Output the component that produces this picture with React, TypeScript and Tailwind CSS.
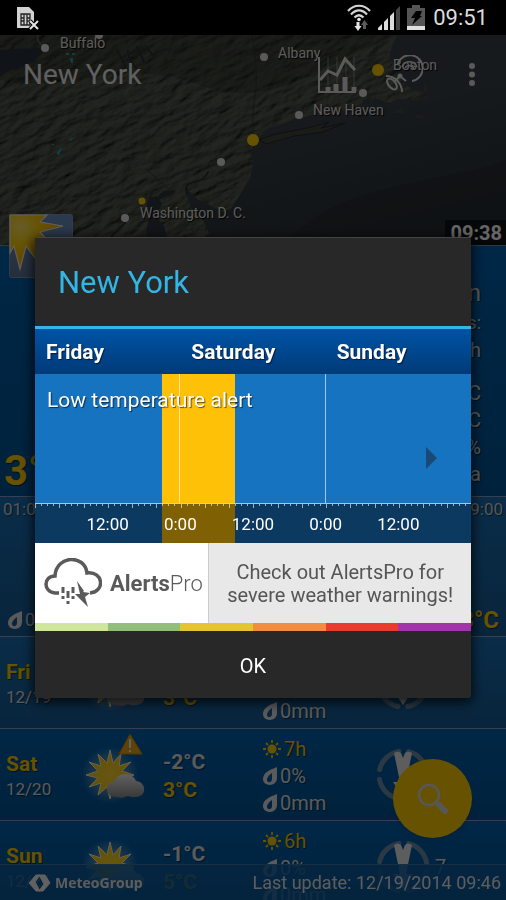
import type { ReactNode } from 'react';

interface Forecast {
  day: string;
  date: string;
  min: string;
  max: string;
  sun: string;
  chance: string;
  rain: string;
  wind: string;
  alert?: boolean;
}

const forecasts: Forecast[] = [
  { day: 'Fri', date: '12/19', min: '-1°C', max: '3°C', sun: '5h', chance: '0%', rain: '0mm', wind: '' },
  { day: 'Sat', date: '12/20', min: '-2°C', max: '3°C', sun: '7h', chance: '0%', rain: '0mm', wind: '', alert: true },
  { day: 'Sun', date: '12/21', min: '-1°C', max: '5°C', sun: '6h', chance: '0%', rain: '0mm', wind: '7' },
];

const cities = [
  { name: 'Buffalo', place: 'left-[60px] top-0' },
  { name: 'Albany', place: 'left-[278px] top-[10px]' },
  { name: 'Boston', place: 'left-[393px] top-[22px]' },
  { name: 'New Haven', place: 'left-[313px] top-[67px]' },
  { name: 'Washington D. C.', place: 'left-[140px] top-[170px]' },
];

const days = ['Friday', 'Saturday', 'Sunday'];
const hours = ['12:00', '0:00', '12:00', '0:00', '12:00'];

// hours counted from Friday 0:00
const TOTAL_HOURS = 72;
const alertRange = { start: 21, end: 33 };

const scale = ['bg-[#cfe69b]', 'bg-[#8fbf7b]', 'bg-[#e6c235]', 'bg-[#f58b3c]', 'bg-[#e63e2d]', 'bg-[#a334ab]'];

function StatusBar() {
  return (
    <header className="relative z-30 flex h-[35px] shrink-0 items-center justify-between bg-black pr-[18px] pl-4">
      <svg width="24" height="26" viewBox="0 0 24 26" aria-hidden="true">
        <path d="M1 2h12l5 5v16H1z" fill="#d2d2d2" />
        <path d="M5 9h9v11H5zM5 13h3M5 16h3M11 13h3M11 16h3M8 9v11M11 9v11" fill="none" stroke="#222" strokeWidth="1.3" />
        <path d="M14 16l8 8M22 16l-8 8" stroke="#000" strokeWidth="4" />
        <path d="M14 16l8 8M22 16l-8 8" stroke="#e4e4e4" strokeWidth="2" />
      </svg>
      <div className="flex items-center gap-[6px]">
        <svg width="24" height="27" viewBox="0 0 24 27" fill="none" aria-hidden="true">
          <path d="M1 7C7 0 17 0 23 7M4 10.500C9 5 15 5 20 10.500M7.500 13.500C10.500 10.500 13.500 10.500 16.500 13.500" stroke="#d6d6d6" strokeWidth="2.200" />
          <circle cx="12" cy="15.500" r="1.800" fill="#e6e6e6" />
          <path d="M9.500 18h3v4h2L11 27l-3.500-5h2z" fill="#e6e6e6" />
          <path d="M16 25v-4h-2l3.500-5 3.500 5h-2v4z" fill="#5a5a5a" />
        </svg>
        <svg width="24" height="26" viewBox="0 0 24 26" aria-hidden="true">
          <path d="M1 25v-2l4-4v6zM7 25v-8l4-4v12zM13 25V11l4-4v18z" fill="#dcdcdc" />
          <path d="M19 25V5l4-4v24z" fill="#444" />
        </svg>
        <svg width="18" height="27" viewBox="0 0 18 27" aria-hidden="true">
          <path d="M0 4h5V1h8v3h5v22H0z" fill="#555" />
          <path d="M0 22h18v4H0z" fill="#e0e0e0" />
          <path d="M9 7h6l-2 5h2L5 21l3-7H4z" fill="#000" />
        </svg>
        <span className="pl-[2px] text-[22px] leading-none text-[#dcdcdc]">09:51</span>
      </div>
    </header>
  );
}

function MapTerrain() {
  return (
    <svg className="absolute inset-0 h-full w-full" viewBox="0 0 506 210" preserveAspectRatio="xMinYMin slice" aria-hidden="true">
      <defs>
        <filter id="relief" x="0" y="0" width="100%" height="100%">
          <feTurbulence type="fractalNoise" baseFrequency="0.05 0.13" numOctaves="6" seed="8" result="noise" />
          <feDiffuseLighting in="noise" surfaceScale="3" lightingColor="#5c6154" result="light">
            <feDistantLight azimuth="235" elevation="44" />
          </feDiffuseLighting>
          <feComposite in="light" in2="SourceGraphic" operator="in" />
        </filter>
        <linearGradient id="sea" x1="0" y1="0" x2="0.6" y2="1">
          <stop offset="0" stopColor="#39434c" />
          <stop offset="0.6" stopColor="#384149" />
          <stop offset="1" stopColor="#2c3338" />
        </linearGradient>
        <clipPath id="land">
          <path d="M0 0H397L391 14 389 24 396 31 397 40 403 47 411 54 423 57 426 49 421 43 427 52 427 63 415 65 398 64 391 68 382 66 374 62 371 70 363 64 361 74 345 77 330 80 312 80 292 86 270 93 259 102 253 111 250 118 254 125 250 143 240 160 231 174 222 177 208 169 198 165 190 157 187 152 186 158 191 172 204 187 209 198 196 210H0z" />
        </clipPath>
      </defs>
      <rect width="506" height="210" fill="url(#sea)" />
      <path d="M285 210C320 165 380 155 425 145S480 135 506 125V210z" fill="#20262a" opacity="0.4" />
      <g clipPath="url(#land)">
        <g transform="rotate(-24 200 100)">
          <rect x="-120" y="-180" width="700" height="560" fill="#fff" filter="url(#relief)" />
        </g>
        <path d="M0 45C60 60 120 20 200 50S330 20 400 0V-10H0z" fill="#20241b" opacity="0.3" />
      </g>
      <path d="M0 15Q24 13 46 13Q38 27 22 31Q8 35 0 42z" fill="#2a333c" />
      <path d="M38 0q-2 8 7 12" fill="none" stroke="#777d7a" />
      <g fill="none" stroke="#29313a" strokeLinecap="round">
        <path d="M117 15l8 15M128 16q1 10 9 18M137 12l7 15M146 11l7 10" strokeWidth="2" />
        <path d="M208 137q-3 8-14 10t-7 12" strokeWidth="2" />
        <path d="M150 168l12-6 12-6M125 188l-6 6-8 8" strokeWidth="2" />
        <path d="M254 106q-3-25 1-45t-3-61" opacity="0.7" />
        <path d="M171 156L146 134" opacity="0.7" />
      </g>
      <path d="M149 163l9-2 6-5 11-1-7 5-9 4 3 5-4 7 1 9 5 6 3 12 1 12h-20l-2-20 3-10-4-8z" fill="#2c353d" />
      <path d="M259 105Q275 98 292 96L312 92 329 87 321 93 345 88 323 97 294 101 266 109z" fill="#42473a" stroke="#20282d" />
      <path d="M392 78l10-5 2 5zM414 80l8 1 3 2-7 0z" fill="#454b3e" />
      <path
        d="M66 18h3v2h-3zM72 18h3v2h-3zM70 23h3v3h-3zM71 26h2v2h-2zM57 117l4-4 1 1-3 6h-2zM69 104l5-1-3 3zM52 109h2v1h-2z"
        fill="#2b93ad"
      />
      <g fill="#e2e2e2">
        <circle cx="45" cy="13" r="4" />
        <path d="M95 0h8q0 4-4 4t-4-4z" />
        <circle cx="264" cy="22" r="4" />
        <circle cx="299" cy="80" r="4" />
        <circle cx="363" cy="58" r="4" />
        <circle cx="221" cy="127" r="4" />
        <circle cx="125" cy="183" r="4" />
      </g>
      <g fill="#ffcc00">
        <circle cx="378" cy="35" r="6" />
        <circle cx="253" cy="105" r="6" />
        <circle cx="142" cy="166" r="3.500" />
      </g>
    </svg>
  );
}

function WeatherTile() {
  return (
    <svg className="absolute top-[179px] left-[9px] z-10" width="64" height="64" viewBox="0 0 64 64" aria-hidden="true">
      <defs>
        <linearGradient id="sky" x1="0" y1="0" x2="0" y2="1">
          <stop offset="0" stopColor="#6b93c4" />
          <stop offset="1" stopColor="#5f7398" />
        </linearGradient>
        <radialGradient id="disc" cx="0.2" cy="0.22" r="0.7">
          <stop offset="0" stopColor="#ffe860" />
          <stop offset="0.5" stopColor="#ffcf05" />
          <stop offset="1" stopColor="#f5b000" />
        </radialGradient>
      </defs>
      <rect x="0.500" y="0.500" width="63" height="63" rx="2" fill="url(#sky)" stroke="#7f98b8" />
      <path d="M1 1H38L31 8 54 12 31 18 48 36 26 31 29 48 17 32 11 55 5 32 1 39z" fill="url(#disc)" stroke="#f4edd0" strokeWidth="1.200" />
    </svg>
  );
}

function RadarMap() {
  return (
    <section className="relative h-[211px] shrink-0 border-b border-[#6b8faf] bg-[#383e38]">
      <div className="absolute inset-0 overflow-hidden">
        <MapTerrain />
        {cities.map((city) => (
          <span key={city.name} className={`absolute text-sm leading-4 text-[#e6e6e6] [text-shadow:1px_1px_1px_#000] ${city.place}`}>
            {city.name}
          </span>
        ))}
        <span className="absolute right-0 bottom-0 bg-black/60 pt-[2px] pr-1 pl-[5px] text-xl leading-[23px] font-bold text-white">09:38</span>
      </div>
      <div className="relative flex h-20 items-center justify-between pr-[29px] pl-[23px]">
        <h1 className="text-[28px] leading-none text-[#f0f0f0]">New York</h1>
        <div className="flex items-center gap-[26px]">
          <button aria-label="Charts">
            <svg width="40" height="40" viewBox="0 0 40 40" fill="none" stroke="#e0e0e0">
              <path d="M2 2v35h37" strokeWidth="2" />
              <path d="M11 2v30M20 2v26M29 2v19M37 2v30" opacity="0.4" />
              <path d="M3 25l8-9 9 4 8-16 10 11" strokeWidth="3" />
              <path d="M11 32v4M19 29v7M28 22v14M37 32v4" strokeWidth="5" />
            </svg>
          </button>
          <div className="flex items-center gap-11">
            <button aria-label="Radar">
              <svg width="40" height="40" viewBox="0 0 40 40" fill="none" stroke="#e0e0e0" strokeWidth="2">
                <path d="M14.500 9A13 13 0 1 1 29 26" />
                <path d="M19 12A8 8 0 0 1 34 12M22 13A5 5 0 0 1 31 14" strokeWidth="1.500" />
                <path d="M3 21A16 16 0 0 1 19 37M12 26l5-5 6 5" />
                <ellipse cx="9" cy="29" rx="3.500" ry="6.500" transform="rotate(-40 9 29)" />
                <circle cx="17" cy="21" r="1.500" fill="#e0e0e0" />
              </svg>
            </button>
            <button aria-label="More options">
              <svg width="10" height="24" viewBox="0 0 10 24" fill="#e0e0e0">
                <circle cx="5" cy="3" r="3" />
                <circle cx="5" cy="11.500" r="3" />
                <circle cx="5" cy="20" r="3" />
              </svg>
            </button>
          </div>
        </div>
      </div>
      <WeatherTile />
    </section>
  );
}

function DropIcon() {
  return (
    <svg width="16" height="20" viewBox="0 0 16 20" className="shrink-0" aria-hidden="true">
      <path d="M15 1v11c0 9-14 9-14 1C1 7 7 4 15 1zM10 7c-4 3-5 5-5 7 0 3 5 3 5-1z" fill="#e2e2e2" fillRule="evenodd" />
    </svg>
  );
}

function SunIcon() {
  return (
    <svg width="20" height="20" viewBox="0 0 20 20" className="shrink-0" aria-hidden="true">
      <circle cx="10" cy="10" r="4.500" fill="#ffcc00" />
      <path d="M10 1v3M10 16v3M1 10h3M16 10h3M4 4l2 2M14 14l2 2M16 4l-2 2M6 14l-2 2" stroke="#ffcc00" strokeWidth="1.800" />
    </svg>
  );
}

function SunCloud({ alert }: { alert?: boolean }) {
  return (
    <svg width="64" height="70" viewBox="0 0 64 70" className="-mt-4 -ml-[2px]" aria-hidden="true">
      <defs>
        <radialGradient id="glow">
          <stop offset="0.4" stopColor="#fff" stopOpacity="0.35" />
          <stop offset="1" stopColor="#fff" stopOpacity="0" />
        </radialGradient>
        <radialGradient id="sunFill">
          <stop offset="0" stopColor="#ffd838" />
          <stop offset="1" stopColor="#f7c800" />
        </radialGradient>
        <linearGradient id="cloud" x1="0" y1="0" x2="0" y2="1">
          <stop offset="0" stopColor="#f2f2f2" />
          <stop offset="1" stopColor="#8c8c8c" />
        </linearGradient>
      </defs>
      <circle cx="27" cy="42" r="29" fill="url(#glow)" />
      <path
        d="M27 17L30 30 38 21 36 33 48 29 39 38 51 42 39 45 48 54 36 50 38 62 30 54 27 66 24 54 15 62 18 50 6 54 15 45 3 42 15 38 6 29 18 33 15 21 24 30z"
        fill="url(#sunFill)"
        stroke="#fff3c0"
        strokeWidth="1"
      />
      <path d="M33 64c-11 0-12-14-2-15 3-10 18-11 22-1 11 1 11 16 0 16q-4 1-8-1-6 3-12 1z" fill="url(#cloud)" />
      {alert && (
        <>
          <path d="M47 1L59 21H36z" fill="#eda21a" stroke="#c98800" strokeLinejoin="round" />
          <path d="M47 6v9M47 17v2" stroke="#f4f4f4" strokeWidth="2" />
        </>
      )}
    </svg>
  );
}

function WindRose() {
  return (
    <svg width="56" height="58" viewBox="0 0 56 58" aria-hidden="true">
      <circle cx="28" cy="29" r="24" fill="none" stroke="#6f8ca8" strokeWidth="5" strokeLinecap="round" strokeDasharray="27.700 10" strokeDashoffset="-5" />
      <path d="M19 7q4-3 7 0l2 5 2-5q3-3 7 0l-6 29h7L28 51 18 36h7z" fill="#e8e8e8" />
    </svg>
  );
}

function Metric({ icon, children }: { icon: ReactNode; children: ReactNode }) {
  return (
    <div className="flex h-[27px] items-center gap-[2px] text-xl">
      {icon}
      <span>{children}</span>
    </div>
  );
}

function ForecastRow({ item }: { item: Forecast }) {
  const rowColor = item.day === 'Fri' ? 'bg-linear-to-b from-[#196fb5] to-[#155c96]' : 'bg-linear-to-b from-[#0062b0] to-[#005496]';
  return (
    <li
      className={`grid h-[92px] shrink-0 grid-cols-[79fr_78fr_99fr_113fr_131fr] border-b border-[#86a3c3] pl-[6px] text-[#e4e4e4] [text-shadow:1px_1px_1px_#0008] ${rowColor}`}
    >
      <div className="pt-[22px]">
        <div className="text-[21px] leading-[26px] font-bold text-[#ffcc00]">{item.day}</div>
        <div className="text-[17px] leading-6">{item.date}</div>
      </div>
      <div className="pt-5">
        <SunCloud alert={item.alert} />
      </div>
      <div className="pt-[19px] text-[21px] leading-7 font-bold">
        <div>{item.min}</div>
        <div className="text-[#ffcc00]">{item.max}</div>
      </div>
      <div className="pt-[6px]">
        <div className="text-[#ffcc00]">
          <Metric icon={<SunIcon />}>{item.sun}</Metric>
        </div>
        <Metric icon={<DropIcon />}>{item.chance}</Metric>
        <Metric icon={<DropIcon />}>{item.rain}</Metric>
      </div>
      <div className="flex items-center gap-1 text-xl">
        <WindRose />
        <span>{item.wind}</span>
      </div>
    </li>
  );
}

function CurrentWeather() {
  return (
    <section className="flex h-[251px] shrink-0 items-end justify-between border-b border-[#86a3c3] bg-linear-to-b from-[#0062b0] to-[#005496] pr-[25px] pl-1 text-[#e0e0e0] [text-shadow:1px_1px_1px_#0008]">
      <div className="text-[42px] leading-[50px] font-bold text-[#ffcc00]">3°C</div>
      <div className="pb-2 text-right text-xl leading-[27px]">
        <div className="text-2xl leading-8">Sun</div>
        <div className="text-lg leading-7">Gusts:</div>
        <div className="pb-4">9 km/h</div>
        <div>-1°C</div>
        <div>-4°C</div>
        <div>70%</div>
        <div>1016 hPa</div>
      </div>
    </section>
  );
}

function HourlyStrip() {
  return (
    <section className="flex h-[140px] shrink-0 flex-col justify-between border-b border-[#86a3c3] bg-linear-to-b from-[#196fb5] to-[#155c96] px-[3px] text-[#d8d8d8] [text-shadow:1px_1px_1px_#0008]">
      <div className="flex justify-between pt-[2px] text-[17px] leading-5">
        <span>01:00</span>
        <span>19:00</span>
      </div>
      <div className="flex items-center justify-between pr-1 pl-1">
        <div className="flex items-center gap-[2px] text-lg">
          <DropIcon />
          <span>0%</span>
        </div>
        <span className="text-2xl font-bold text-[#ffcc00]">3°C</span>
      </div>
    </section>
  );
}

function CloudLogo() {
  return (
    <svg width="58" height="50" viewBox="0 0 58 50" fill="none" stroke="#5a5a5a" aria-hidden="true">
      <path d="M15 35H11C-1 34-1 18 11 18 12-3 41-4 43 15 60 13 61 34 46 35" strokeWidth="3.500" />
      <path d="M19 29v6M24 33v7M29 29v6M19 38v3M24 43v3M29 38v3" strokeWidth="3" />
      <path d="M33 23L40 33 39 34 46 35 41 39 44 49 31 36 36 36z" fill="#5a5a5a" stroke="none" />
    </svg>
  );
}

function AlertTimeline() {
  const left = `${(alertRange.start / TOTAL_HOURS) * 100}%`;
  const width = `${((alertRange.end - alertRange.start) / TOTAL_HOURS) * 100}%`;

  return (
    <div className="relative bg-[#1673bf]">
      <div className="absolute inset-y-0 bg-[#ffc107]" style={{ left, width }} />
      <div className="relative">
        <div className="grid h-[129px] grid-cols-3 divide-x divide-white/60">
          {days.map((day) => (
            <div key={day} />
          ))}
        </div>
        <p className="absolute top-[13px] left-3 text-[21px] leading-[26px] text-white [text-shadow:1px_1px_1px_#0009]">Low temperature alert</p>
        <button className="absolute top-[73px] right-[34px]" aria-label="Next alert">
          <svg width="11" height="22" viewBox="0 0 11 22">
            <path d="M0 0l11 11L0 22z" fill="#184a75" />
          </svg>
        </button>
      </div>
      <div className="relative h-10 border-t border-white/70 bg-black/50">
        <div className="flex h-1">
          {Array.from({ length: TOTAL_HOURS }, (_, i) => (
            <span key={i} className={`flex-1 border-l border-white/60 ${i % 4 === 0 ? 'h-1' : 'h-[2px]'}`} />
          ))}
        </div>
        <div className="grid grid-cols-12 pt-1 text-center text-[17px] leading-6 text-white">
          {hours.map((hour, i) => (
            <span key={i} className={i === 0 ? 'col-span-2 col-start-2' : 'col-span-2'}>
              {hour}
            </span>
          ))}
        </div>
      </div>
    </div>
  );
}

function AlertDialog() {
  return (
    <div className="fixed inset-0 z-20 flex items-center bg-black/60 px-[35px] pt-[35px]">
      <div role="dialog" aria-labelledby="alert-title" className="w-full overflow-hidden rounded-[3px] bg-[#282828] shadow-[0_3px_12px_2px_#000b]">
        <h2 id="alert-title" className="border-t border-b-[3px] border-[#444] border-b-[#33b5e5] px-[23px] pt-[27px] pb-[25px] text-[31px] leading-9 text-[#33b5e5]">
          New York
        </h2>
        <div className="grid h-[45px] grid-cols-3 items-center bg-linear-to-b from-[#0053a6] to-[#003a78] pt-[2px] text-[21px] font-bold text-white [text-shadow:1px_1px_1px_#0009]">
          {days.map((day) => (
            <span key={day} className="pl-[11px]">
              {day}
            </span>
          ))}
        </div>
        <AlertTimeline />
        <a href="#alertspro" className="flex h-20 bg-[#e8e8e8] text-[#555]">
          <span className="flex w-2/5 items-center gap-2 border-r border-[#ccc] bg-white pl-[9px] text-[22px] text-[#5a5a5a]">
            <CloudLogo />
            <span>
              <b>Alerts</b>
              <span className="font-light">Pro</span>
            </span>
          </span>
          <span className="flex flex-1 items-center justify-center pt-[2px] text-center text-xl leading-[23px]">
            Check out AlertsPro for
            <br />
            severe weather warnings!
          </span>
        </a>
        <div className="flex h-2">
          {scale.map((color) => (
            <span key={color} className={`flex-1 ${color}`} />
          ))}
        </div>
        <button className="h-[67px] w-full pt-[2px] text-xl text-white">OK</button>
      </div>
    </div>
  );
}

function UpdateBar() {
  return (
    <footer className="fixed inset-x-0 bottom-0 z-10 flex h-9 items-center justify-between border-t border-[#3b75a8] bg-[#0d5c9c]/85 pr-[5px] pl-7 text-[#e8e8e8]">
      <div className="flex items-center gap-1">
        <svg width="23" height="18" viewBox="0 0 23 18" fill="#f2f2f2" stroke="#f2f2f2" strokeLinejoin="round" aria-hidden="true">
          <path d="M1 9L8 1h4L7 8l5 9H8z" />
          <path d="M11 1h6l5 8-7 8h-4l5-7z" />
        </svg>
        <span className="font-['Open_Sans',sans-serif] text-sm font-bold">MeteoGroup</span>
      </div>
      <span className="text-lg">Last update: 12/19/2014 09:46</span>
    </footer>
  );
}

export default function App() {
  return (
    <div className="flex h-screen flex-col overflow-hidden bg-[#0056a0] font-[Roboto,sans-serif]">
      <StatusBar />
      <main className="flex flex-col">
        <RadarMap />
        <CurrentWeather />
        <HourlyStrip />
        <ul>
          {forecasts.map((item) => (
            <ForecastRow key={item.day} item={item} />
          ))}
        </ul>
      </main>
      <UpdateBar />
      <button aria-label="Search" className="fixed right-[34px] bottom-[62px] z-10 flex size-[79px] items-center justify-center rounded-full bg-[#ffcc00] shadow-md">
        <svg width="32" height="32" viewBox="0 0 32 32" fill="none" stroke="#dadada">
          <circle cx="12" cy="12" r="10" strokeWidth="2.500" />
          <path d="M19 19l3 3" strokeWidth="3" />
          <path d="M22 22l6 6" strokeWidth="6" strokeLinecap="round" />
        </svg>
      </button>
      <AlertDialog />
    </div>
  );
}
